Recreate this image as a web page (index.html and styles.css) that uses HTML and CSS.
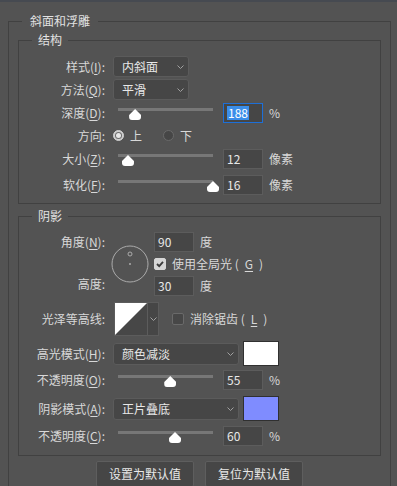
FILE: index.html
```html
<!DOCTYPE html>
<html lang="zh-CN">
<head>
    <meta charset="UTF-8">
    <meta name="viewport" content="width=device-width, initial-scale=1.0">
    <title>斜面和浮雕</title>
    <link rel="stylesheet" href="styles.css">
</head>
<body>
    <fieldset class="group">
        <legend>斜面和浮雕</legend>

        <!-- 结构 -->
        <fieldset class="sub sub-structure">
            <legend>结构</legend>

            <div class="row">
                <span class="lbl">样式(<u>I</u>):</span>
                <div class="select select-sm">内斜面
                    <svg class="chev" width="7" height="4" viewBox="0 0 7 4"><path d="M0.5 0.5 L3.5 3.5 L6.5 0.5"/></svg>
                </div>
            </div>

            <div class="row">
                <span class="lbl">方法(<u>Q</u>):</span>
                <div class="select select-sm">平滑
                    <svg class="chev" width="7" height="4" viewBox="0 0 7 4"><path d="M0.5 0.5 L3.5 3.5 L6.5 0.5"/></svg>
                </div>
            </div>

            <div class="row">
                <span class="lbl">深度(<u>D</u>):</span>
                <div class="slider"><span class="thumb" style="left: 18%"></span></div>
                <div class="field active"><span class="selected">188</span></div>
                <span class="unit">%</span>
            </div>

            <div class="row">
                <span class="lbl">方向:</span>
                <label class="option"><span class="radio on"></span>上</label>
                <label class="option option-next"><span class="radio"></span>下</label>
            </div>

            <div class="row">
                <span class="lbl">大小(<u>Z</u>):</span>
                <div class="slider"><span class="thumb" style="left: 10.5%"></span></div>
                <div class="field">12</div>
                <span class="unit">像素</span>
            </div>

            <div class="row row-space">
                <span class="lbl">软化(<u>F</u>):</span>
                <div class="slider"><span class="thumb" style="left: 100%"></span></div>
                <div class="field">16</div>
                <span class="unit">像素</span>
            </div>
        </fieldset>

        <!-- 阴影 -->
        <fieldset class="sub sub-shadow">
            <legend>阴影</legend>

            <div class="angle">
                <span class="lbl lbl-top">角度(<u>N</u>):</span>
                <svg class="dial" width="38" height="38" viewBox="0 0 38 38">
                    <circle cx="19" cy="19" r="18" fill="none" stroke="#ababab"/>
                    <circle cx="19" cy="9" r="2" fill="none" stroke="#ababab"/>
                    <circle cx="19" cy="19" r="1" fill="#ababab"/>
                </svg>
                <div class="cell"><div class="field field-flat">90</div><span class="unit">度</span></div>
                <label class="cell check-line"><span class="box on"><svg width="10" height="10" viewBox="0 0 10 10"><path d="M2 5 L4.2 7.2 L8 2.8"/></svg></span>使用全局光 (<u>G</u>)</label>
                <span class="lbl lbl-bottom">高度:</span>
                <div class="cell"><div class="field field-flat">30</div><span class="unit">度</span></div>
            </div>

            <div class="row row-contour">
                <span class="lbl">光泽等高线:</span>
                <div class="contour">
                    <svg class="contour-img" width="34" height="34" viewBox="0 0 34 34">
                        <rect width="34" height="34" fill="#474747"/>
                        <polygon points="1,1 33,1 1,33" fill="#ffffff"/>
                    </svg>
                    <div class="contour-drop">
                        <svg class="chev" width="7" height="4" viewBox="0 0 7 4"><path d="M0.5 0.5 L3.5 3.5 L6.5 0.5"/></svg>
                    </div>
                </div>
                <label class="check-line check-aa"><span class="box"></span>消除锯齿 (<u>L</u>)</label>
            </div>

            <div class="row row-mode">
                <span class="lbl">高光模式(<u>H</u>):</span>
                <div class="select select-lg">颜色减淡
                    <svg class="chev" width="7" height="4" viewBox="0 0 7 4"><path d="M0.5 0.5 L3.5 3.5 L6.5 0.5"/></svg>
                </div>
                <span class="swatch swatch-white"></span>
            </div>

            <div class="row row-opacity">
                <span class="lbl">不透明度(<u>O</u>):</span>
                <div class="slider"><span class="thumb" style="left: 55%"></span></div>
                <div class="field">55</div>
                <span class="unit">%</span>
            </div>

            <div class="row row-mode">
                <span class="lbl">阴影模式(<u>A</u>):</span>
                <div class="select select-lg">正片叠底
                    <svg class="chev" width="7" height="4" viewBox="0 0 7 4"><path d="M0.5 0.5 L3.5 3.5 L6.5 0.5"/></svg>
                </div>
                <span class="swatch swatch-blue"></span>
            </div>

            <div class="row row-space">
                <span class="lbl">不透明度(<u>C</u>):</span>
                <div class="slider"><span class="thumb" style="left: 60%"></span></div>
                <div class="field">60</div>
                <span class="unit">%</span>
            </div>
        </fieldset>

        <div class="actions">
            <button type="button" class="btn">设置为默认值</button>
            <button type="button" class="btn">复位为默认值</button>
        </div>
    </fieldset>
</body>
</html>
```

FILE: styles.css
```css
* {
    box-sizing: border-box;
}

html,
body {
    overflow: hidden;
}

body {
    margin: 0;
    height: 486px;
    padding: 11px 6px 0 8px;
    border-top: 2px solid #464a51;
    background: #535353;
    color: #d8d8d8;
    font-family: "Noto Sans CJK SC", "Noto Sans", sans-serif;
    font-size: 12px;
    line-height: 16px;
}

fieldset {
    margin: 0;
    padding: 0;
    min-width: 0;
    border: 1px solid #414141;
}

legend {
    margin-left: 4px;
    padding: 0 8px;
    line-height: 16px;
    color: #e2e2e2;
}

u {
    text-underline-offset: 2px;
}

.group {
    padding: 3px 9px 10px;
}

.sub legend {
    margin-left: 13px;
    padding: 0 6px;
}

.sub-structure {
    padding: 7px 0;
}

.sub-shadow {
    margin-top: 4px;
    padding: 8px 0;
}

/* rows */

.row {
    display: flex;
    align-items: center;
    height: 23px;
}

.row-space {
    margin-top: 3px;
}

.lbl {
    flex: none;
    width: 86px;
    text-align: right;
    white-space: nowrap;
}

/* dropdowns */

.select {
    flex: none;
    display: flex;
    align-items: center;
    justify-content: space-between;
    height: 21px;
    margin-left: 8px;
    padding: 0 4px 0 8px;
    background: #464646;
    border: 1px solid #5b5b5b;
    border-radius: 3px;
    color: #e8e8e8;
}

.select-sm {
    width: 76px;
}

.select-lg {
    width: 126px;
    height: 22px;
}

.chev path {
    fill: none;
    stroke: #a0a0a0;
    stroke-width: 1;
}

/* sliders */

.slider {
    position: relative;
    flex: none;
    align-self: stretch;
    width: 95px;
    margin-left: 13px;
}

.slider::before {
    content: "";
    position: absolute;
    left: 0;
    right: 0;
    top: 7px;
    height: 3px;
    background: #777;
}

.thumb {
    position: absolute;
    top: 8px;
    width: 12px;
    height: 11px;
    margin-left: -6px;
    background: #fff;
    border-radius: 0 0 3px 3px;
    clip-path: polygon(50% 0, 100% 55%, 100% 100%, 0 100%, 0 55%);
}

/* number fields */

.field {
    flex: none;
    width: 40px;
    height: 20px;
    margin-left: 10px;
    padding-left: 3px;
    background: #464646;
    border: 1px solid #5c5c5c;
    color: #e8e8e8;
    line-height: 18px;
}

.field.active {
    border-color: #1d6fd8;
}

.field-flat {
    margin-left: 0;
}

.selected {
    display: inline-block;
    padding: 0 1px;
    background: #3b8eea;
    color: #fff;
    line-height: 14px;
}

.unit {
    margin-left: 6px;
}

/* radios */

.option {
    display: flex;
    align-items: center;
    gap: 6px;
    margin-left: 8px;
}

.option-next {
    margin-left: 21px;
}

.radio {
    position: relative;
    width: 11px;
    height: 11px;
    border-radius: 50%;
    background: #464646;
    border: 1px solid #6a6a6a;
}

.radio.on {
    background: #cfcfcf;
    border-color: #cfcfcf;
}

.radio.on::after {
    content: "";
    position: absolute;
    left: 2px;
    top: 2px;
    width: 5px;
    height: 5px;
    border-radius: 50%;
    background: #e8e8e8;
    box-shadow: 0 0 0 1px #6d6d6d;
}

/* angle block */

.angle {
    display: grid;
    grid-template-columns: 86px 49px auto;
    grid-template-rows: repeat(3, 20px);
    row-gap: 2px;
    align-items: center;
}

.lbl-top {
    grid-column: 1;
    grid-row: 1;
}

.lbl-bottom {
    grid-column: 1;
    grid-row: 3;
    margin-top: -4px;
}

.dial {
    grid-column: 2;
    grid-row: 1 / 4;
    justify-self: center;
    align-self: center;
}

.cell {
    grid-column: 3;
    display: flex;
    align-items: center;
}

.check-line {
    display: flex;
    align-items: center;
    gap: 6px;
}

.box {
    flex: none;
    display: flex;
    align-items: center;
    justify-content: center;
    width: 12px;
    height: 12px;
    border-radius: 2px;
    background: #474747;
    border: 1px solid #6a6a6a;
}

.box.on {
    background: #d6d6d6;
    border-color: #d6d6d6;
}

.box path {
    fill: none;
    stroke: #3a3a3a;
    stroke-width: 1.8;
}

/* contour */

.row-contour {
    height: 34px;
    margin-top: 6px;
}

.contour {
    display: flex;
    margin-left: 9px;
}

.contour-img {
    display: block;
    outline: 1px solid #5c5c5c;
    outline-offset: -1px;
}

.contour-drop {
    display: flex;
    align-items: center;
    justify-content: center;
    width: 11px;
    height: 34px;
    background: #464646;
    border: 1px solid #5c5c5c;
    border-left: none;
}

.check-aa {
    margin-left: 13px;
}

/* blend modes */

.row-mode {
    height: 25px;
    margin-top: 5px;
}

.row-opacity {
    margin-top: 2px;
}

.swatch {
    flex: none;
    width: 36px;
    height: 25px;
    margin-left: 4px;
    border: 1px solid #303030;
}

.swatch-white {
    background: #fff;
}

.swatch-blue {
    background: #7f8cff;
}

/* buttons */

.actions {
    display: flex;
    justify-content: center;
    gap: 11px;
    margin-top: 5px;
}

.btn {
    width: 98px;
    height: 26px;
    padding: 0;
    background: #464646;
    border: 1px solid #5e5e5e;
    border-radius: 2px;
    color: #e8e8e8;
    font: inherit;
    line-height: 24px;
}
```
